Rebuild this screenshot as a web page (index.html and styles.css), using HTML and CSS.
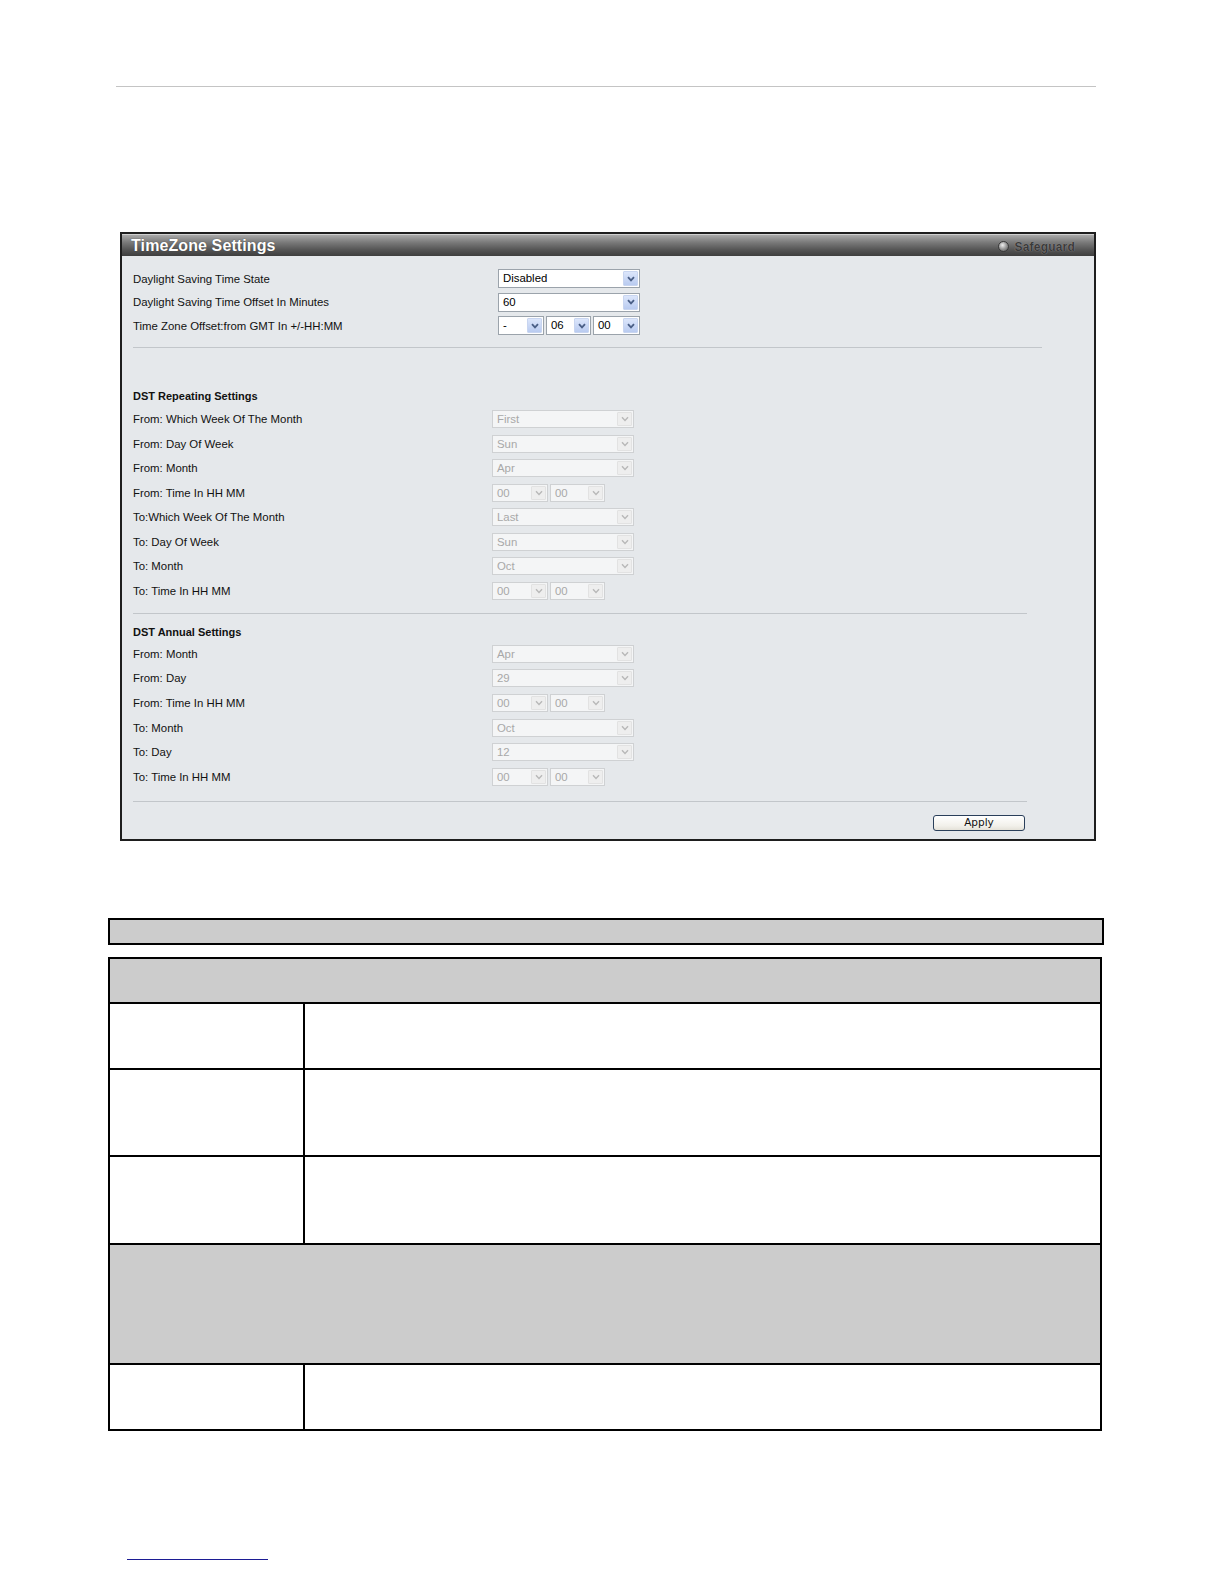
FILE: index.html
```html
<!DOCTYPE html>
<html>
<head>
<meta charset="utf-8">
<title>TimeZone Settings</title>
<link rel="stylesheet" href="styles.css">
</head>
<body>
<div class="page">
  <div class="toprule"></div>

  <div class="panel">
    <div class="panel-head">
      <span class="title">TimeZone Settings</span>
      <span class="safeguard"><span class="sg-dot"></span><span class="sg-text">Safeguard</span></span>
    </div>
    <div class="panel-body">
      <div class="sec-main">
        <div class="row main-row">
          <span class="lbl lbl-main">Daylight Saving Time State</span>
          <div class="sel w142"><span class="val">Disabled</span><span class="arr"><svg viewBox="0 0 8 6" width="8" height="6"><path d="M1 1.2 L4 4.4 L7 1.2" fill="none" stroke="currentColor" stroke-width="1.8"/></svg></span></div>
        </div>
        <div class="row main-row">
          <span class="lbl lbl-main">Daylight Saving Time Offset In Minutes</span>
          <div class="sel w142"><span class="val">60</span><span class="arr"><svg viewBox="0 0 8 6" width="8" height="6"><path d="M1 1.2 L4 4.4 L7 1.2" fill="none" stroke="currentColor" stroke-width="1.8"/></svg></span></div>
        </div>
        <div class="row main-row">
          <span class="lbl lbl-main">Time Zone Offset:from GMT In +/-HH:MM</span>
          <div class="sel-group">
            <div class="sel w46"><span class="val">-</span><span class="arr"><svg viewBox="0 0 8 6" width="8" height="6"><path d="M1 1.2 L4 4.4 L7 1.2" fill="none" stroke="currentColor" stroke-width="1.8"/></svg></span></div>
            <div class="sel w45"><span class="val">06</span><span class="arr"><svg viewBox="0 0 8 6" width="8" height="6"><path d="M1 1.2 L4 4.4 L7 1.2" fill="none" stroke="currentColor" stroke-width="1.8"/></svg></span></div>
            <div class="sel w47"><span class="val">00</span><span class="arr"><svg viewBox="0 0 8 6" width="8" height="6"><path d="M1 1.2 L4 4.4 L7 1.2" fill="none" stroke="currentColor" stroke-width="1.8"/></svg></span></div>
          </div>
        </div>
      </div>

      <div class="rule rule-wide rule-a"></div>

      <div class="heading heading-a">DST Repeating Settings</div>
      <div class="sec-dst">
        <div class="row dst-row"><span class="lbl lbl-dst">From: Which Week Of The Month</span><div class="sel dis w142"><span class="val">First</span><span class="arr"><svg viewBox="0 0 8 6" width="8" height="6"><path d="M1 1.2 L4 4.4 L7 1.2" fill="none" stroke="currentColor" stroke-width="1.4"/></svg></span></div></div>
        <div class="row dst-row"><span class="lbl lbl-dst">From: Day Of Week</span><div class="sel dis w142"><span class="val">Sun</span><span class="arr"><svg viewBox="0 0 8 6" width="8" height="6"><path d="M1 1.2 L4 4.4 L7 1.2" fill="none" stroke="currentColor" stroke-width="1.4"/></svg></span></div></div>
        <div class="row dst-row"><span class="lbl lbl-dst">From: Month</span><div class="sel dis w142"><span class="val">Apr</span><span class="arr"><svg viewBox="0 0 8 6" width="8" height="6"><path d="M1 1.2 L4 4.4 L7 1.2" fill="none" stroke="currentColor" stroke-width="1.4"/></svg></span></div></div>
        <div class="row dst-row"><span class="lbl lbl-dst">From: Time In HH MM</span><div class="sel-group"><div class="sel dis w56"><span class="val">00</span><span class="arr"><svg viewBox="0 0 8 6" width="8" height="6"><path d="M1 1.2 L4 4.4 L7 1.2" fill="none" stroke="currentColor" stroke-width="1.4"/></svg></span></div><div class="sel dis w55"><span class="val">00</span><span class="arr"><svg viewBox="0 0 8 6" width="8" height="6"><path d="M1 1.2 L4 4.4 L7 1.2" fill="none" stroke="currentColor" stroke-width="1.4"/></svg></span></div></div></div>
        <div class="row dst-row"><span class="lbl lbl-dst">To:Which Week Of The Month</span><div class="sel dis w142"><span class="val">Last</span><span class="arr"><svg viewBox="0 0 8 6" width="8" height="6"><path d="M1 1.2 L4 4.4 L7 1.2" fill="none" stroke="currentColor" stroke-width="1.4"/></svg></span></div></div>
        <div class="row dst-row"><span class="lbl lbl-dst">To: Day Of Week</span><div class="sel dis w142"><span class="val">Sun</span><span class="arr"><svg viewBox="0 0 8 6" width="8" height="6"><path d="M1 1.2 L4 4.4 L7 1.2" fill="none" stroke="currentColor" stroke-width="1.4"/></svg></span></div></div>
        <div class="row dst-row"><span class="lbl lbl-dst">To: Month</span><div class="sel dis w142"><span class="val">Oct</span><span class="arr"><svg viewBox="0 0 8 6" width="8" height="6"><path d="M1 1.2 L4 4.4 L7 1.2" fill="none" stroke="currentColor" stroke-width="1.4"/></svg></span></div></div>
        <div class="row dst-row"><span class="lbl lbl-dst">To: Time In HH MM</span><div class="sel-group"><div class="sel dis w56"><span class="val">00</span><span class="arr"><svg viewBox="0 0 8 6" width="8" height="6"><path d="M1 1.2 L4 4.4 L7 1.2" fill="none" stroke="currentColor" stroke-width="1.4"/></svg></span></div><div class="sel dis w55"><span class="val">00</span><span class="arr"><svg viewBox="0 0 8 6" width="8" height="6"><path d="M1 1.2 L4 4.4 L7 1.2" fill="none" stroke="currentColor" stroke-width="1.4"/></svg></span></div></div></div>
      </div>

      <div class="rule rule-narrow rule-b"></div>

      <div class="heading heading-b">DST Annual Settings</div>
      <div class="sec-dst">
        <div class="row dst-row"><span class="lbl lbl-dst">From: Month</span><div class="sel dis w142"><span class="val">Apr</span><span class="arr"><svg viewBox="0 0 8 6" width="8" height="6"><path d="M1 1.2 L4 4.4 L7 1.2" fill="none" stroke="currentColor" stroke-width="1.4"/></svg></span></div></div>
        <div class="row dst-row"><span class="lbl lbl-dst">From: Day</span><div class="sel dis w142"><span class="val">29</span><span class="arr"><svg viewBox="0 0 8 6" width="8" height="6"><path d="M1 1.2 L4 4.4 L7 1.2" fill="none" stroke="currentColor" stroke-width="1.4"/></svg></span></div></div>
        <div class="row dst-row"><span class="lbl lbl-dst">From: Time In HH MM</span><div class="sel-group"><div class="sel dis w56"><span class="val">00</span><span class="arr"><svg viewBox="0 0 8 6" width="8" height="6"><path d="M1 1.2 L4 4.4 L7 1.2" fill="none" stroke="currentColor" stroke-width="1.4"/></svg></span></div><div class="sel dis w55"><span class="val">00</span><span class="arr"><svg viewBox="0 0 8 6" width="8" height="6"><path d="M1 1.2 L4 4.4 L7 1.2" fill="none" stroke="currentColor" stroke-width="1.4"/></svg></span></div></div></div>
        <div class="row dst-row"><span class="lbl lbl-dst">To: Month</span><div class="sel dis w142"><span class="val">Oct</span><span class="arr"><svg viewBox="0 0 8 6" width="8" height="6"><path d="M1 1.2 L4 4.4 L7 1.2" fill="none" stroke="currentColor" stroke-width="1.4"/></svg></span></div></div>
        <div class="row dst-row"><span class="lbl lbl-dst">To: Day</span><div class="sel dis w142"><span class="val">12</span><span class="arr"><svg viewBox="0 0 8 6" width="8" height="6"><path d="M1 1.2 L4 4.4 L7 1.2" fill="none" stroke="currentColor" stroke-width="1.4"/></svg></span></div></div>
        <div class="row dst-row"><span class="lbl lbl-dst">To: Time In HH MM</span><div class="sel-group"><div class="sel dis w56"><span class="val">00</span><span class="arr"><svg viewBox="0 0 8 6" width="8" height="6"><path d="M1 1.2 L4 4.4 L7 1.2" fill="none" stroke="currentColor" stroke-width="1.4"/></svg></span></div><div class="sel dis w55"><span class="val">00</span><span class="arr"><svg viewBox="0 0 8 6" width="8" height="6"><path d="M1 1.2 L4 4.4 L7 1.2" fill="none" stroke="currentColor" stroke-width="1.4"/></svg></span></div></div></div>
      </div>

      <div class="rule rule-narrow rule-c"></div>

      <div class="btn-row">
        <button class="btn">Apply</button>
      </div>
    </div>
  </div>

  <div class="caption-box"></div>

  <table class="desc">
    <tr class="gray h45"><td colspan="2"></td></tr>
    <tr class="h66"><td class="c1"></td><td></td></tr>
    <tr class="h87"><td class="c1"></td><td></td></tr>
    <tr class="h88"><td class="c1"></td><td></td></tr>
    <tr class="gray h120"><td colspan="2"></td></tr>
    <tr class="h66"><td class="c1"></td><td></td></tr>
  </table>

  <div class="footline"></div>
</div>
</body>
</html>
```

FILE: styles.css
```css
* { box-sizing: border-box; }

html, body {
  margin: 0;
  padding: 0;
  background: #ffffff;
}

body {
  font-family: "Liberation Sans", Arial, sans-serif;
  color: #000;
}

.page {
  padding-top: 86px;
  padding-bottom: 10px;
}

.toprule {
  margin-left: 116px;
  width: 980px;
  height: 1px;
  background: #c4c4c4;
}

/* ---------- panel ---------- */
.panel {
  margin-top: 145px;
  margin-left: 120px;
  width: 976px;
  border: 2px solid #1e1e1e;
  background: #e5e8eb;
}

.panel-head {
  height: 22px;
  display: flex;
  align-items: center;
  justify-content: space-between;
  padding: 0 19px 0 9px;
  background: linear-gradient(#a9a9a9 0%, #7a7a7a 35%, #555555 70%, #3e3e3e 100%);
  border-top: 1px solid #d0d0d0;
}

.title {
  color: #ffffff;
  font-weight: bold;
  font-size: 16px;
  letter-spacing: 0.1px;
  text-shadow: 0 0 1px #333;
}

.safeguard {
  display: flex;
  align-items: center;
  gap: 6px;
  padding-top: 2px;
}

.sg-dot {
  width: 11px;
  height: 11px;
  border-radius: 50%;
  background: radial-gradient(circle at 40% 35%, #f0f0f0 0%, #a0a0a0 45%, #505050 100%);
  border: 1px solid #3a3a3a;
}

.sg-text {
  font-size: 12px;
  font-weight: bold;
  color: #3a3a3a;
  text-shadow: 0 0 1px #a8a8a8;
  letter-spacing: 0.2px;
}

.panel-body {
  padding: 11px 11px 8px 11px;
}

/* ---------- rows ---------- */
.row {
  display: flex;
  align-items: center;
}

.main-row { height: 23.5px; }
.dst-row { height: 24.57px; }

.lbl {
  font-size: 11.4px;
  color: #111;
  flex: none;
}

.lbl-main { width: 365px; }
.lbl-dst { width: 359px; }

.heading {
  font-size: 11px;
  font-weight: bold;
  height: 14px;
  line-height: 14px;
  color: #111;
}

.heading-a { margin-top: 41px; margin-bottom: 3.7px; }
.heading-b { margin-top: 11px; margin-bottom: 2.7px; }

.rule {
  height: 1px;
  background: #c2c6ca;
}

.rule-wide { width: 909px; }
.rule-narrow { width: 894px; }
.rule-a { margin-top: 9.5px; }
.rule-b { margin-top: 9.7px; }
.rule-c { margin-top: 12px; }

/* ---------- select boxes ---------- */
.sel-group {
  display: flex;
  gap: 2px;
}

.sel {
  height: 19px;
  display: flex;
  align-items: stretch;
  justify-content: space-between;
  background: #ffffff;
  border: 1px solid #9ba3ab;
}

.sel .val {
  font-size: 11.4px;
  line-height: 17px;
  padding-left: 4px;
  color: #000;
}

.sel .arr {
  width: 15px;
  margin: 1px;
  display: flex;
  align-items: center;
  justify-content: center;
  background: linear-gradient(#dce6fb, #b9cbf0);
  border: 1px solid #c8d5f0;
  border-radius: 1px;
  color: #4a5f86;
}

.sel.dis {
  height: 18px;
  background: #f4f5f6;
  border: 1px solid #cfd1d3;
}

.sel.dis .val {
  color: #a8a8a8;
  line-height: 16px;
}

.sel.dis .arr {
  background: #eeeeee;
  border: 1px solid #e2e2e2;
  color: #b8b8b8;
}

.w142 { width: 142px; }
.w46 { width: 46px; }
.w45 { width: 45px; }
.w47 { width: 47px; }
.w56 { width: 56px; }
.w55 { width: 55px; }

/* ---------- button ---------- */
.btn-row {
  width: 894px;
  display: flex;
  justify-content: flex-end;
  margin-top: 13px;
}

.btn {
  width: 92px;
  height: 16px;
  margin-right: 2px;
  padding: 0;
  font-family: "DejaVu Sans", Verdana, sans-serif;
  font-size: 10.5px;
  line-height: 13px;
  color: #111;
  background: linear-gradient(#ffffff, #f2f0ea 70%, #e4e1d8);
  border: 1px solid #2a3f5a;
  border-radius: 3px;
}

/* ---------- description table ---------- */
.caption-box {
  margin-top: 77px;
  margin-left: 108px;
  width: 996px;
  height: 27px;
  background: #cccccc;
  border: 2px solid #000;
}

.desc {
  margin-top: 12px;
  margin-left: 108px;
  width: 994px;
  border-collapse: collapse;
  border: 2px solid #000;
}

.desc td {
  border: 2px solid #000;
  padding: 0;
}

.desc .c1 { width: 195px; }

.gray td { background: #cccccc; }

.h45 { height: 45px; }
.h66 { height: 66px; }
.h87 { height: 87px; }
.h88 { height: 88px; }
.h120 { height: 120px; }

.footline {
  margin-top: 128px;
  margin-left: 127px;
  width: 141px;
  height: 1px;
  background: #1c1c94;
}
```
